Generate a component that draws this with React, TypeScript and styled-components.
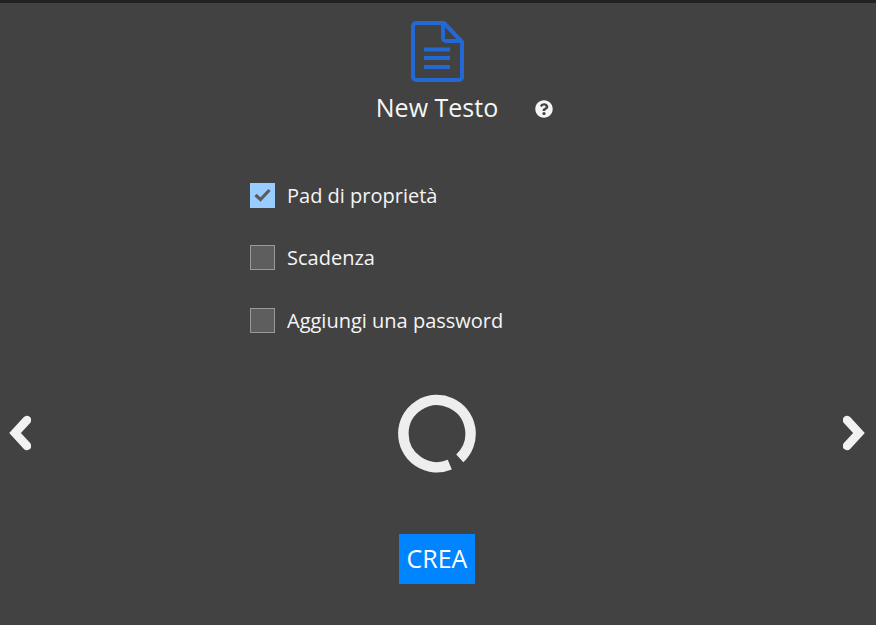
import React from 'react';
import styled, { createGlobalStyle } from 'styled-components';
import { FaQuestionCircle } from 'react-icons/fa';

const GlobalStyle = createGlobalStyle`
  html, body {
    margin: 0;
    padding: 0;
    background: #424242;
  }
  * {
    box-sizing: border-box;
  }
`;

const Page = styled.div`
  width: 876px;
  height: 625px;
  overflow: hidden;
  border-top: 3px solid #222222;
  background: #424242;
  color: #f5f5f5;
  font-family: "Open Sans", "Liberation Sans", sans-serif;
  display: grid;
  grid-template-columns: 39px 1fr 41px;
`;

const Side = styled.div<{ $right?: boolean }>`
  display: flex;
  justify-content: ${(p) => (p.$right ? 'flex-end' : 'flex-start')};
  padding: 412px ${(p) => (p.$right ? '11px' : '0')} 0 ${(p) => (p.$right ? '0' : '9px')};
`;

const Main = styled.main`
  display: flex;
  flex-direction: column;
  align-items: center;
`;

const DocIcon = styled.svg`
  display: block;
  width: 53px;
  height: 61px;
  margin-top: 18px;
  fill: none;
  stroke: #2468d4;
  stroke-width: 4;
  stroke-linejoin: round;
`;

const TitleRow = styled.div`
  width: 100%;
  display: grid;
  grid-template-columns: 1fr auto 1fr;
  align-items: center;
  margin-top: 8px;
`;

const Title = styled.h1`
  grid-column: 2;
  margin: 0;
  font-size: 25px;
  font-weight: 400;
  line-height: 34px;
`;

const HelpIcon = styled(FaQuestionCircle)`
  width: 18px;
  height: 18px;
  margin-left: 37px;
  margin-top: 4px;
  color: #f5f5f5;
`;

const Options = styled.div`
  width: 374px;
  margin-top: 58.9px;
  display: flex;
  flex-direction: column;
  gap: 37.5px;
`;

const Option = styled.label`
  display: flex;
  align-items: center;
  gap: 12px;
  height: 25px;
  font-size: 20px;
  line-height: 25px;
`;

const Box = styled.span<{ $checked?: boolean }>`
  width: 25px;
  height: 25px;
  display: flex;
  align-items: center;
  justify-content: center;
  background: ${(p) => (p.$checked ? '#99ccff' : '#5e5e5e')};
  border: 1px solid ${(p) => (p.$checked ? '#99ccff' : '#999999')};
`;

const Spinner = styled.svg`
  display: block;
  width: 80px;
  height: 80px;
  margin-top: 60px;
  fill: none;
  stroke: #eeeeee;
  stroke-width: 10.5;
`;

const CreateButton = styled.button`
  width: 76px;
  height: 50px;
  margin-top: 61px;
  padding: 0 0 2px;
  border: none;
  background: #0084ff;
  color: #ffffff;
  font-family: inherit;
  font-size: 25px;
`;

const Chevron: React.FC<{ right?: boolean }> = ({ right }) => (
  <svg width="22" height="36" viewBox="0 0 22 36">
    <polyline
      points={right ? '4,5 16,18 4,31' : '18,5 6,18 18,31'}
      fill="none"
      stroke="#f2f2f2"
      strokeWidth="8.5"
      strokeLinecap="round"
      strokeLinejoin="miter"
    />
  </svg>
);

const options = [
  { label: 'Pad di proprietà', checked: true },
  { label: 'Scadenza', checked: false },
  { label: 'Aggiungi una password', checked: false },
];

const App: React.FC = () => {
  return (
    <Page>
      <GlobalStyle />
      <Side>
        <Chevron />
      </Side>
      <Main>
        <DocIcon viewBox="0 0 53 61">
          <path d="M5 2H33L51 21V56a3 3 0 0 1-3 3H5a3 3 0 0 1-3-3V5a3 3 0 0 1 3-3Z" />
          <path d="M32 2V17a3 3 0 0 0 3 3H51" />
          <path d="M13 28.5H39M13 37H39M13 46H39" />
        </DocIcon>
        <TitleRow>
          <Title>New Testo</Title>
          <HelpIcon />
        </TitleRow>
        <Options>
          {options.map((o) => (
            <Option key={o.label}>
              <Box $checked={o.checked}>
                {o.checked && (
                  <svg width="17" height="14" viewBox="0 0 17 14">
                    <polyline points="1.5,7 6.5,11.5 15.5,2" fill="none" stroke="#5c5c5c" strokeWidth="3.2" />
                  </svg>
                )}
              </Box>
              {o.label}
            </Option>
          ))}
        </Options>
        <Spinner viewBox="-0.3 -0.3 80 80">
          {/* ring with a small gap low on the right */}
          <path d="M52.5 71.4A33.6 33.6 0 1 1 62.5 65" />
        </Spinner>
        <CreateButton>CREA</CreateButton>
      </Main>
      <Side $right>
        <Chevron right />
      </Side>
    </Page>
  );
};

export default App;
